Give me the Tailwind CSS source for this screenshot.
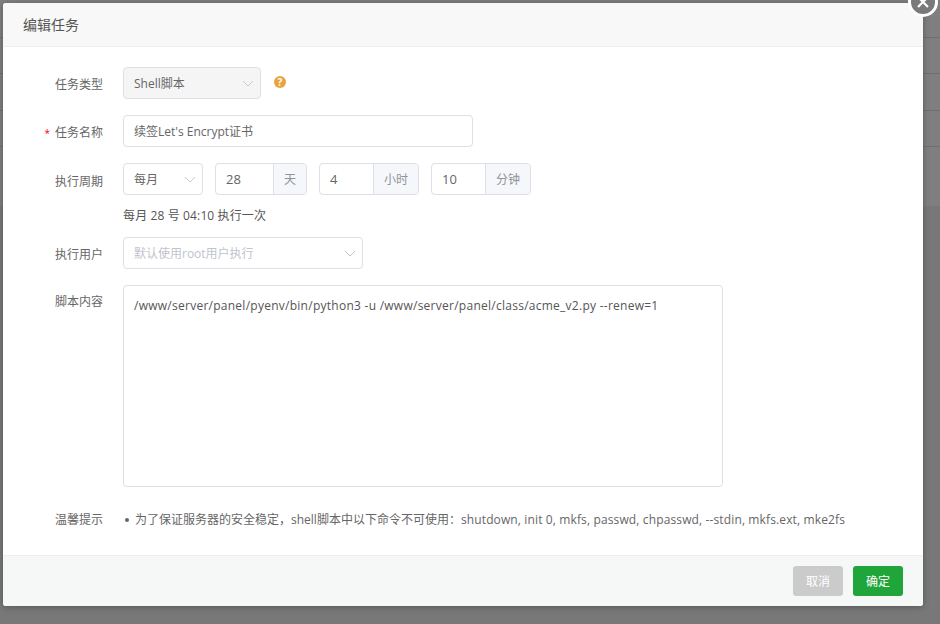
<!DOCTYPE html>
<html lang="zh-CN">
<head>
    <meta charset="UTF-8">
    <title>编辑任务</title>
    <script src="https://cdn.jsdelivr.net/npm/@tailwindcss/browser@4"></script>
</head>
<body class="relative h-[624px] w-[940px] overflow-hidden bg-[#787878] font-['Open_Sans','Noto_Sans_CJK_SC',sans-serif] text-xs text-[#666]">
    <!-- dimmed table behind the modal -->
    <div class="h-[206px] bg-[#7f7f7f]">
        <div class="h-[38px] border-b border-[#6f6f6f]"></div>
        <div class="h-[36px] border-b border-[#6f6f6f]"></div>
        <div class="h-[37px] border-b border-[#6f6f6f]"></div>
        <div class="h-[36px] border-b border-[#6f6f6f]"></div>
    </div>

    <div class="absolute left-[3px] top-[3px] flex h-[603px] w-[920px] flex-col rounded-[3px] bg-white shadow-[0_1px_6px_rgba(0,0,0,0.3)]">
        <div class="flex h-[44px] items-center rounded-t-[3px] border-b border-[#eee] bg-[#f8f8f8] pl-5 text-sm text-[#555]">编辑任务</div>

        <button class="absolute right-[-15px] top-[-16px] flex h-[30px] w-[30px] items-center justify-center rounded-full border-[3px] border-white bg-[#7a7a7a]">
            <svg width="14" height="14" viewBox="0 0 14 14" class="mt-[-1px]"><path d="M2 2l10 10M12 2L2 12" stroke="#fff" stroke-width="2.2" fill="none"/></svg>
        </button>

        <div class="flex-1 pt-5">
            <div class="mb-4 flex h-8">
                <label class="w-[100px] pt-[9px] text-right leading-[17px]">任务类型</label>
                <div class="ml-5 flex h-8 w-[138px] items-center justify-between rounded border border-[#dcdfe6] bg-[#f5f5f5] pl-[10px] pr-[6px]">
                    <span class="pt-px">Shell脚本</span>
                    <svg width="12" height="7" viewBox="0 0 12 7"><path d="M1 1l5 5 5-5" stroke="#c8cbd2" fill="none"/></svg>
                </div>
                <div class="ml-[13px] mt-[9px] flex h-3 w-3 items-center justify-center rounded-full bg-[#e8a33d] text-[10px] font-bold leading-none text-white">?</div>
            </div>

            <div class="mb-4 flex h-8">
                <label class="w-[100px] pt-[9px] text-right leading-[17px]"><span class="mr-[5px] text-[10px] text-[#ef0808]">*</span>任务名称</label>
                <div class="ml-5 flex h-8 w-[350px] items-center rounded border border-[#dcdfe6] pl-[10px] pt-px">续签Let's Encrypt证书</div>
            </div>

            <div class="flex h-8">
                <label class="w-[100px] pt-[10px] text-right leading-[17px]">执行周期</label>
                <div class="ml-5 flex h-8 w-20 items-center justify-between rounded border border-[#dcdfe6] pl-[10px] pr-[6px]">
                    <span class="pt-px">每月</span>
                    <svg width="12" height="7" viewBox="0 0 12 7"><path d="M1 1l5 5 5-5" stroke="#c8cbd2" fill="none"/></svg>
                </div>
                <div class="ml-3 flex h-8 w-[92px] rounded border border-[#dcdfe6]">
                    <div class="flex w-[57px] items-center pl-[10px] pt-[2px] text-[13px]">28</div>
                    <div class="flex flex-1 items-center justify-center rounded-r border-l border-[#dcdfe6] bg-[#f5f7fa] pt-px text-[#909399]">天</div>
                </div>
                <div class="ml-3 flex h-8 w-[100px] rounded border border-[#dcdfe6]">
                    <div class="flex w-[53px] items-center pl-[10px] pt-[2px] text-[13px]">4</div>
                    <div class="flex flex-1 items-center justify-center rounded-r border-l border-[#dcdfe6] bg-[#f5f7fa] pt-px text-[#909399]">小时</div>
                </div>
                <div class="ml-3 flex h-8 w-[100px] rounded border border-[#dcdfe6]">
                    <div class="flex w-[53px] items-center pl-[10px] pt-[2px] text-[13px]">10</div>
                    <div class="flex flex-1 items-center justify-center rounded-r border-l border-[#dcdfe6] bg-[#f5f7fa] pt-px text-[#909399]">分钟</div>
                </div>
            </div>
            <div class="ml-[120px] flex h-[42px] items-center tracking-[0.13px] text-[#555]">每月 28 号 04:10 执行一次</div>

            <div class="mb-4 flex h-8">
                <label class="w-[100px] pt-[9px] text-right leading-[17px]">执行用户</label>
                <div class="ml-5 flex h-8 w-60 items-center justify-between rounded border border-[#dcdfe6] pl-[10px] pr-[6px] text-[#c0c4cc]">
                    <span class="pt-px">默认使用root用户执行</span>
                    <svg width="12" height="7" viewBox="0 0 12 7"><path d="M1 1l5 5 5-5" stroke="#c0c4cc" fill="none"/></svg>
                </div>
            </div>

            <div class="flex h-[202px]">
                <label class="w-[100px] pt-2 text-right leading-[17px]">脚本内容</label>
                <div class="ml-5 h-[202px] w-[600px] rounded border border-[#dcdfe6] px-[10px] pt-[10px] leading-[20px] tracking-[0.26px] text-[#555]">/www/server/panel/pyenv/bin/python3 -u /www/server/panel/class/acme_v2.py --renew=1</div>
            </div>

            <div class="mt-6 flex leading-[18px]">
                <label class="w-[100px] text-right">温馨提示</label>
                <ul class="ml-5 flex items-center">
                    <li class="ml-[2px] mr-[6px] h-1 w-1 rounded-full bg-[#666]"></li>
                    <li>为了保证服务器的安全稳定，shell脚本中以下命令不可使用：<span class="tracking-[0.13px]">shutdown, init 0, mkfs, passwd, chpasswd, --stdin, mkfs.ext, mke2fs</span></li>
                </ul>
            </div>
        </div>

        <div class="flex h-[51px] items-center justify-end gap-[10px] rounded-b-[3px] border-t border-[#eee] bg-[#f6f8f8] pr-5">
            <button class="h-[30px] w-[50px] rounded-[3px] bg-[#cbcbcb] pt-[2px] text-xs text-white">取消</button>
            <button class="h-[30px] w-[50px] rounded-[3px] bg-[#20a53a] pt-[2px] text-xs text-white">确定</button>
        </div>
    </div>
</body>
</html>
